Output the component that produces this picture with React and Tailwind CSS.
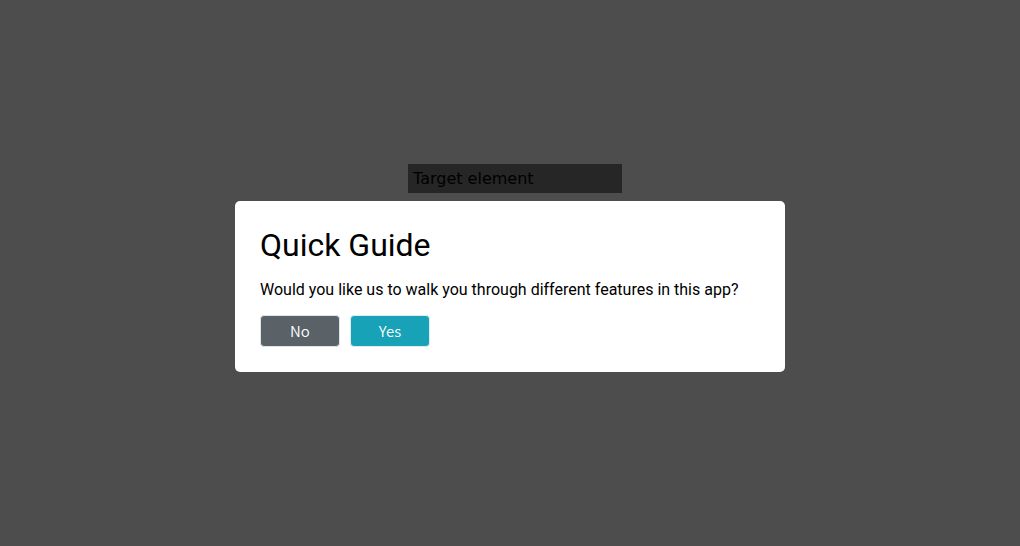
export default function App() {
  return (
    <main className="flex min-h-screen flex-col bg-[#4d4d4d] pt-[164px] text-black">
      <div className="ml-[40%] w-[21%] bg-[#262626] p-[5px] font-['DejaVu_Sans',sans-serif] text-base leading-[19px]">
        Target element
      </div>
      <section
        role="dialog"
        aria-labelledby="guide-title"
        className="mx-auto mt-2 w-full max-w-[550px] rounded-[5px] bg-white p-[25px] font-['Roboto',sans-serif]"
      >
        <h1 id="guide-title" className="text-[32px] leading-[38px]">Quick Guide</h1>
        <p className="mt-4 text-base leading-[19px]">
          Would you like us to walk you through different features in this app?
        </p>
        <div className="mt-4 flex gap-[10px] font-['Noto_Sans_CJK_SC',sans-serif] text-[15px] leading-5 font-[350] text-white">
          <button type="button" className="h-8 w-20 rounded-[4px] border border-[#dee5e8] bg-[#5a6268]">No</button>
          <button type="button" className="h-8 w-20 rounded-[4px] border border-[#dcecef] bg-[#17a2b8]">Yes</button>
        </div>
      </section>
    </main>
  );
}
